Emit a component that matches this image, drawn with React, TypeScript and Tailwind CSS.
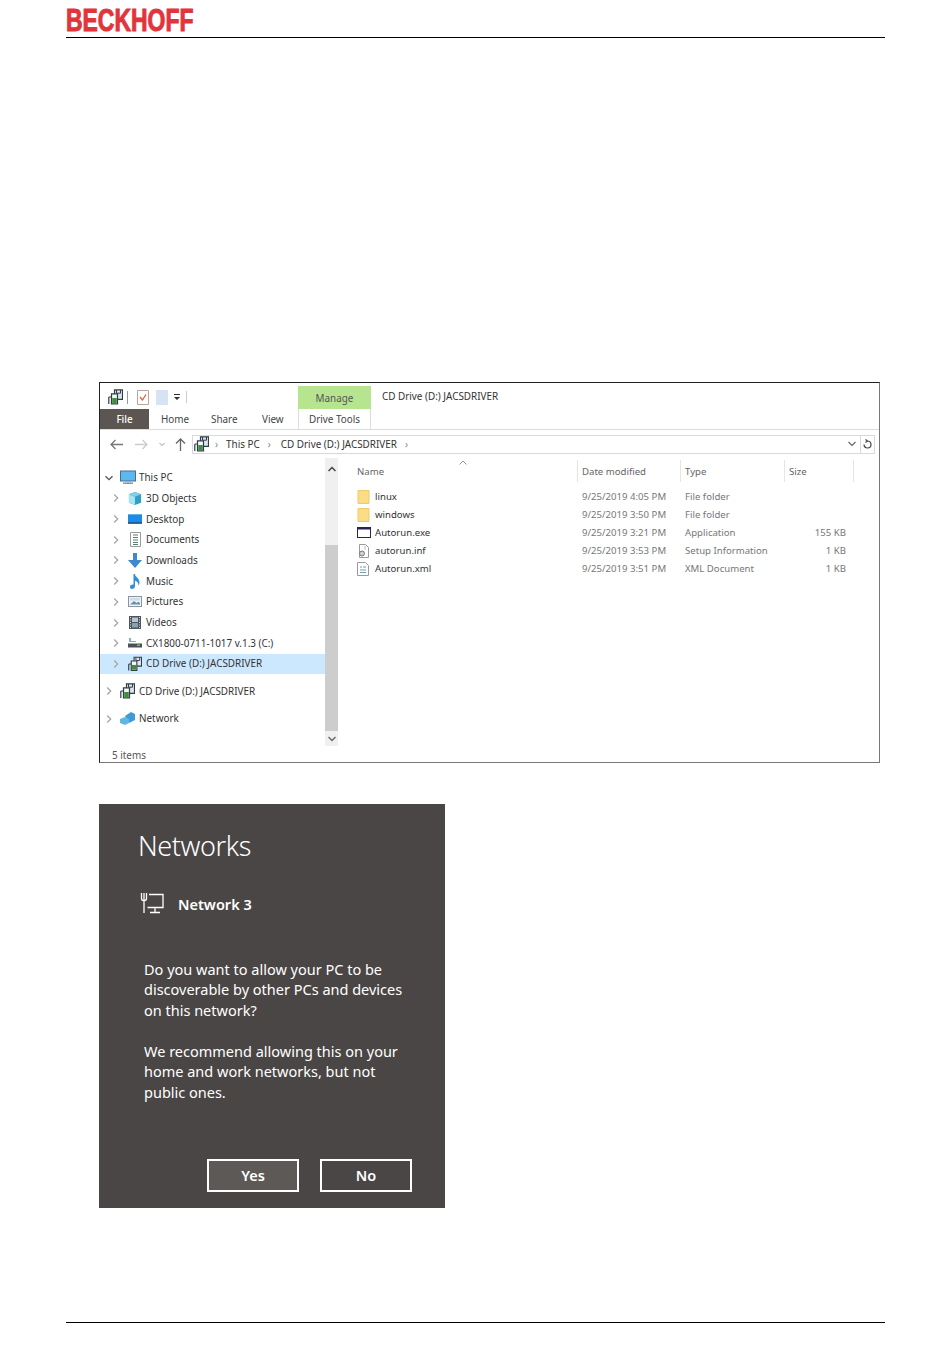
import type { ReactNode } from "react";

const segoe = "font-['Noto_Sans','Open_Sans',sans-serif]";

function Chevron({ open }: { open?: boolean }) {
  return (
    <svg width="8" height="8" viewBox="0 0 8 8" fill="none" stroke={open ? "#555" : "#a6a6a6"} strokeWidth="1.3">
      {open ? <path d="M0.5 2.2 4 5.7 7.500 2.2" /> : <path d="M2.2 0.5 5.700 4 2.2 7.500" />}
    </svg>
  );
}

function DriveIcon() {
  return (
    <svg width="15" height="16" viewBox="0 0 15 16" fill="none">
      <path d="M6.500 0.800h8v9.500h-8z" fill="#dfe6ee" stroke="#2f3d48" strokeWidth="1.200" />
      <path d="M8.500 1v3.200h4V1" stroke="#2f3d48" />
      <path d="M3.500 4.800h6v10h-6z" fill="#f6f8fa" stroke="#2f3d48" strokeWidth="1.200" />
      <path d="M0.800 8v7M3.500 8H0.800" stroke="#2f3d48" strokeWidth="1.200" />
      <rect x="4.200" y="9" width="4.600" height="5" fill="#3f8f3a" />
    </svg>
  );
}

function PcIcon() {
  return (
    <svg width="16" height="15" viewBox="0 0 16 15">
      <rect x="0.500" y="1" width="15" height="10" fill="#5cb8ee" stroke="#4a6f8c" />
      <rect x="5" y="11" width="6" height="1.500" fill="#9db5c6" />
      <rect x="3" y="12.500" width="10" height="1.500" fill="#7f9db3" />
    </svg>
  );
}

function CubeIcon() {
  return (
    <svg width="15" height="15" viewBox="0 0 15 15">
      <path d="M7.500 0.500 14 3v9l-6.500 2.500L1 12V3z" fill="#2f9fc8" />
      <path d="M1 3l6.500 2.500V14.500L1 12z" fill="#a9e2f0" />
      <path d="M7.500 0.500 14 3 7.500 5.500 1 3z" fill="#7fd0e6" />
    </svg>
  );
}

function DesktopIcon() {
  return (
    <svg width="15" height="12" viewBox="0 0 15 12">
      <rect x="0" y="1" width="15" height="10" fill="#1a8ce8" />
      <rect x="0" y="9.500" width="15" height="1.500" fill="#1b4f80" />
    </svg>
  );
}

function DocsIcon() {
  return (
    <svg width="11" height="15" viewBox="0 0 11 15" fill="none">
      <path d="M0.500 0.500h10v14H0.500z" fill="#fff" stroke="#9a9a9a" />
      <path d="M3 3h5M3 5.500h5M3 8h5M3 10.500h5M3 12.500h5" stroke="#55806f" />
    </svg>
  );
}

function DownloadIcon() {
  return (
    <svg width="14" height="15" viewBox="0 0 14 15">
      <path d="M5 0h4v7h5l-7 8-7-8h5z" fill="#3f87cf" />
    </svg>
  );
}

function MusicIcon() {
  return (
    <svg width="10" height="15" viewBox="0 0 10 15">
      <path d="M3.500 0h1.300c.3 3 4.700 4 4.700 8.500 0 1.500-.6 2.500-1 3 0-3-1.600-4.200-3.500-4.700V12c0 1.800-1.500 3-3 3S0 14 0 12.700c0-1.500 1.600-2.400 3.500-2.200z" fill="#2f8fdd" />
    </svg>
  );
}

function PicturesIcon() {
  return (
    <svg width="14" height="11" viewBox="0 0 14 11">
      <rect x="0.500" y="0.500" width="13" height="10" fill="#eef2f5" stroke="#8796a3" />
      <path d="M2 8.500 6 5l2.500 2 2-1.200 1.500 1.200v1.500z" fill="#6d8ea8" />
      <rect x="2" y="2" width="10" height="2.500" fill="#cfdde8" />
    </svg>
  );
}

function VideosIcon() {
  return (
    <svg width="12" height="13" viewBox="0 0 12 13">
      <rect x="0" y="0" width="12" height="13" fill="#4d5560" />
      <path d="M1 1h1v1H1zM1 3.500h1v1H1zM1 6h1v1H1zM1 8.500h1v1H1zM1 11h1v1H1zM10 1h1v1h-1zM10 3.500h1v1h-1zM10 6h1v1h-1zM10 8.500h1v1h-1zM10 11h1v1h-1z" fill="#d8dde2" />
      <rect x="3" y="1.500" width="6" height="4.500" fill="#b9c6cf" />
      <rect x="3" y="7" width="6" height="4.500" fill="#8ea0ad" />
    </svg>
  );
}

function HddIcon() {
  return (
    <svg width="14" height="10" viewBox="0 0 14 10">
      <rect x="1" y="0" width="2" height="4" fill="#7fb2c8" />
      <rect x="3" y="3" width="5" height="1" fill="#8fa6b2" />
      <rect x="0" y="5.500" width="14" height="4" fill="#4a5258" />
      <rect x="9" y="6.500" width="3" height="1.500" fill="#77c24f" />
    </svg>
  );
}

function NetworkIcon() {
  return (
    <svg width="15" height="13" viewBox="0 0 15 13">
      <path d="M5 4 11 0l4 2v6l-6 3z" fill="#3f9ad6" />
      <path d="M0 7l5-2 4 2v4l-4 2-5-2z" fill="#62b6e4" />
    </svg>
  );
}

function FolderIcon() {
  return (
    <svg width="13" height="14" viewBox="0 0 13 14">
      <path d="M1 0.500h11v13H1z" fill="#fbdd85" stroke="#eccb6e" />
    </svg>
  );
}

function ExeIcon() {
  return (
    <svg width="14" height="12" viewBox="0 0 14 12" fill="none">
      <rect x="0.500" y="0.500" width="13" height="10" fill="#fff" stroke="#25255a" />
      <rect x="0.500" y="0.500" width="13" height="2" fill="#25255a" />
    </svg>
  );
}

function InfIcon() {
  return (
    <svg width="13" height="14" viewBox="0 0 13 14" fill="none">
      <path d="M2.500 0.500h6l3 3v10h-9z" fill="#fff" stroke="#9a9a9a" />
      <circle cx="5" cy="9.500" r="2.500" fill="#d0d0d0" stroke="#777" />
      <path d="M7 3h2M7 5h2" stroke="#bbb" />
    </svg>
  );
}

function XmlIcon() {
  return (
    <svg width="12" height="14" viewBox="0 0 12 14" fill="none">
      <path d="M0.500 0.500h8l3 3v10H0.500z" fill="#fff" stroke="#9a9a9a" />
      <path d="M3 5h2M6 5h3M3 8h6M3 10.500h6" stroke="#6f9ab0" />
    </svg>
  );
}

const navRows: { icon: ReactNode; label: string; selected?: boolean }[] = [
  { icon: <CubeIcon />, label: "3D Objects" },
  { icon: <DesktopIcon />, label: "Desktop" },
  { icon: <DocsIcon />, label: "Documents" },
  { icon: <DownloadIcon />, label: "Downloads" },
  { icon: <MusicIcon />, label: "Music" },
  { icon: <PicturesIcon />, label: "Pictures" },
  { icon: <VideosIcon />, label: "Videos" },
  { icon: <HddIcon />, label: "CX1800-0711-1017 v.1.3 (C:)" },
  { icon: <DriveIcon />, label: "CD Drive (D:) JACSDRIVER", selected: true },
];

const files: { icon: ReactNode; name: string; date: string; type: string; size: string }[] = [
  { icon: <FolderIcon />, name: "linux", date: "9/25/2019 4:05 PM", type: "File folder", size: "" },
  { icon: <FolderIcon />, name: "windows", date: "9/25/2019 3:50 PM", type: "File folder", size: "" },
  { icon: <ExeIcon />, name: "Autorun.exe", date: "9/25/2019 3:21 PM", type: "Application", size: "155 KB" },
  { icon: <InfIcon />, name: "autorun.inf", date: "9/25/2019 3:53 PM", type: "Setup Information", size: "1 KB" },
  { icon: <XmlIcon />, name: "Autorun.xml", date: "9/25/2019 3:51 PM", type: "XML Document", size: "1 KB" },
];

function Explorer() {
  return (
    <div className={`ml-[33px] mt-[344px] flex h-[381px] w-[781px] flex-col border border-[#222] border-r-[#777] border-b-[#777] text-[9.9px] ${segoe}`}>
      {/* title bar */}
      <div className="flex h-[26px] items-end">
        <div className="flex h-[24px] w-[198px] items-center pl-[8px]">
          <DriveIcon />
          <div className="ml-[4px] h-[13px] w-px bg-[#999]" />
          <svg className="ml-[8px]" width="14" height="15" viewBox="0 0 14 15" fill="none">
            <path d="M1.500 0.500h11v14h-11z" fill="#fff" stroke="#b5a79b" />
            <path d="M4 7l2.500 3L10 4.500" stroke="#d9603a" strokeWidth="1.300" />
          </svg>
          <div className="ml-[6px] h-[15px] w-[12px] bg-[#d7e3f4]" />
          <svg className="ml-[5px]" width="8" height="8" viewBox="0 0 8 8">
            <path d="M1 1h6v1H1zM1 4h6L4 7z" fill="#333" />
          </svg>
          <div className="ml-[5px] h-[12px] w-px bg-[#ccc]" />
        </div>
        <div className="flex h-[23px] w-[73px] items-center justify-center bg-[#b7e58f] pt-[2px] text-[#555]">Manage</div>
        <div className="ml-[11px] self-center text-[#333]">CD Drive (D:) JACSDRIVER</div>
      </div>
      {/* ribbon tabs */}
      <div className="flex h-[21px] items-center border-b border-[#dcdcdc] text-[#444]">
        <div className="flex h-full w-[49px] items-center justify-center bg-[#5c5653] font-medium text-white">File</div>
        <div className="ml-[12px] w-[50px] pt-[1px]">Home</div>
        <div className="w-[51px] pt-[1px]">Share</div>
        <div className="w-[36px] pt-[1px]">View</div>
        <div className="flex h-full w-[73px] items-center justify-center border-x border-[#dcdcdc] pt-[1px]">Drive Tools</div>
      </div>
      {/* address bar */}
      <div className="flex h-[28px] items-center">
        <div className="flex w-[92px] items-center pl-[10px]">
          <svg width="13" height="11" viewBox="0 0 13 11" fill="none" stroke="#777" strokeWidth="1.300">
            <path d="M13 5.500H1M5.500 1 1 5.500 5.500 10" />
          </svg>
          <svg className="ml-[12px]" width="13" height="11" viewBox="0 0 13 11" fill="none" stroke="#ccc" strokeWidth="1.300">
            <path d="M0 5.500h12M7.500 1 12 5.500 7.500 10" />
          </svg>
          <svg className="ml-[11px]" width="6" height="5" viewBox="0 0 6 5" fill="none" stroke="#999">
            <path d="M0.500 1 3 3.500 5.500 1" />
          </svg>
          <svg className="ml-[10px]" width="11" height="13" viewBox="0 0 11 13" fill="none" stroke="#666" strokeWidth="1.300">
            <path d="M5.500 13V1M1 5.500 5.500 1 10 5.500" />
          </svg>
        </div>
        <div className="flex h-[19px] w-[683px] items-center border border-[#d9d9d9] pl-[1px] text-[#333]">
          <DriveIcon />
          <span className="ml-[6px] pt-[1px] text-[#888]">›</span>
          <span className="ml-[8px] pt-[1px]">This PC</span>
          <span className="ml-[8px] pt-[1px] text-[#888]">›</span>
          <span className="ml-[10px] pt-[1px]">CD Drive (D:) JACSDRIVER</span>
          <span className="ml-[8px] pt-[1px] text-[#888]">›</span>
          <div className="ml-auto flex h-full items-center">
            <svg width="8" height="6" viewBox="0 0 8 6" fill="none" stroke="#666" strokeWidth="1.200">
              <path d="M0.500 1 4 4.500 7.500 1" />
            </svg>
            <div className="ml-[4px] flex h-full w-[14px] items-center justify-center border-l border-[#d9d9d9]">
              <svg width="9" height="10" viewBox="0 0 9 10" fill="none" stroke="#444" strokeWidth="1.200">
                <path d="M4.500 2a3.500 3.500 0 1 1-3.500 3.500M2.500 0.500 4.500 2 2.500 3.500" />
              </svg>
            </div>
          </div>
        </div>
      </div>
      {/* main panes */}
      <div className="flex h-[290px]">
        <div className="h-full w-[225px] pt-[9.4px] text-[#333]">
          <div className="flex h-[20.7px] items-center pl-[5px]">
            <Chevron open />
            <div className="ml-[7px] flex w-[19px] items-center"><PcIcon /></div>
            <span>This PC</span>
          </div>
          {navRows.map((row) => (
            <div key={row.label} className={`flex h-[20.7px] items-center pl-[12px] ${row.selected ? "bg-[#cce8ff]" : ""}`}>
              <Chevron />
              <div className="ml-[8px] flex w-[18px] items-center justify-center pr-[4px]">{row.icon}</div>
              <span>{row.label}</span>
            </div>
          ))}
          <div className="mt-[6.5px] flex h-[20.7px] items-center pl-[5px]">
            <Chevron />
            <div className="ml-[7px] flex w-[19px] items-center"><DriveIcon /></div>
            <span>CD Drive (D:) JACSDRIVER</span>
          </div>
          <div className="mt-[7px] flex h-[20.7px] items-center pl-[5px]">
            <Chevron />
            <div className="ml-[7px] flex w-[19px] items-center"><NetworkIcon /></div>
            <span>Network</span>
          </div>
        </div>
        {/* scrollbar */}
        <div className="flex h-[288px] w-[13px] flex-col bg-[#f0f0f0]">
          <div className="flex h-[87px] justify-center pt-[8px]">
            <svg width="8" height="6" viewBox="0 0 8 6" fill="none" stroke="#444" strokeWidth="1.500">
              <path d="M0.500 5 4 1.500 7.500 5" />
            </svg>
          </div>
          <div className="h-[186px] bg-[#cdcdcd]" />
          <div className="flex flex-1 items-center justify-center">
            <svg width="8" height="6" viewBox="0 0 8 6" fill="none" stroke="#666" strokeWidth="1.300">
              <path d="M0.500 1 4 4.500 7.500 1" />
            </svg>
          </div>
        </div>
        {/* file list */}
        <div className="w-[541px] pl-[18px] text-[9.6px]">
          <div className="relative flex h-[26px] items-center text-[#666]">
            <svg className="absolute left-[103px] top-[2px]" width="8" height="5" viewBox="0 0 8 5" fill="none" stroke="#999">
              <path d="M0.500 4.500 4 1 7.500 4.500" />
            </svg>
            <div className="h-[22px] w-[221px] pl-[1px] pt-[5px]">Name</div>
            <div className="h-[22px] w-[103px] border-l border-[#e5e5e5] pl-[4px] pt-[5px]">Date modified</div>
            <div className="h-[22px] w-[104px] border-l border-[#e5e5e5] pl-[4px] pt-[5px]">Type</div>
            <div className="h-[22px] w-[70px] border-x border-[#e5e5e5] pl-[4px] pt-[5px]">Size</div>
          </div>
          <div className="pt-[4px]">
            {files.map((file) => (
              <div key={file.name} className="flex h-[18px] items-center pl-[1px]">
                <div className="flex w-[18px] items-center">{file.icon}</div>
                <div className="w-[207px] text-[#333]">{file.name}</div>
                <div className="w-[103px] text-[#777]">{file.date}</div>
                <div className="w-[104px] text-[#777]">{file.type}</div>
                <div className="w-[57px] text-right text-[#777]">{file.size}</div>
              </div>
            ))}
          </div>
        </div>
      </div>
      <div className="flex h-[14px] items-center pl-[12px] pt-[1px] text-[#555]">5 items</div>
    </div>
  );
}

function NetworkGlyph() {
  return (
    <svg width="24" height="22" viewBox="0 0 24 22" fill="none" stroke="#fff" strokeWidth="1.300">
      <path d="M1.500 1v5.500a2 2 0 0 0 2 2h1a2 2 0 0 0 2-2V1M4 1v20" />
      <path d="M9 2.500h14v13H7.500" />
      <path d="M15 15.500v5M10 20.500h10" />
    </svg>
  );
}

function NetworksDialog() {
  return (
    <div className={`ml-[33px] mt-[41px] flex h-[404px] w-[346px] flex-col bg-[#4a4645] text-white ${segoe}`}>
      <h1 className="ml-[39px] mt-[22px] text-[27px] font-light leading-[40px] tracking-[-0.4px]">Networks</h1>
      <div className="ml-[41px] mt-[25px] flex items-center">
        <NetworkGlyph />
        <span className="ml-[14px] pt-[3px] text-[14.500px] font-semibold">Network 3</span>
      </div>
      <div className="ml-[45px] mt-[43px] w-[265px] text-[14.500px] leading-[20.5px]">
        <p>Do you want to allow your PC to be discoverable by other PCs and devices on this network?</p>
        <p className="mt-[20.5px]">We recommend allowing this on your home and work networks, but not public ones.</p>
      </div>
      <div className="mb-[16px] mt-auto flex justify-end gap-[21px] pr-[33px]">
        <button className="h-[33px] w-[92px] border-2 border-white bg-[#5c5957] text-[14.500px] font-semibold">Yes</button>
        <button className="h-[33px] w-[92px] border-2 border-white text-[14.500px] font-semibold">No</button>
      </div>
    </div>
  );
}

export default function App() {
  return (
    <div className="h-[1369px] w-[950px] overflow-hidden bg-white pl-[66px] pr-[65px]">
      <div className="h-[38px] border-b border-black pt-[4px]">
        <div className="origin-left scale-x-[0.74] whitespace-nowrap font-['Liberation_Sans',sans-serif] text-[31px] font-bold leading-[34px] text-[#e2343b] [-webkit-text-stroke:1px_#e2343b]">
          BECKHOFF
        </div>
      </div>
      <Explorer />
      <NetworksDialog />
      <div className="mt-[114px] border-t border-black" />
    </div>
  );
}
